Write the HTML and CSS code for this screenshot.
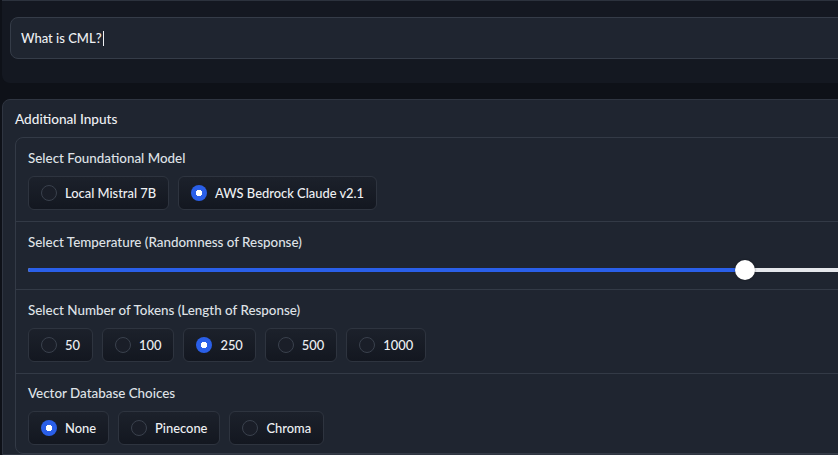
FILE: index.html
```html
<!DOCTYPE html>
<html lang="en">
<head>
<meta charset="utf-8">
<title>Additional Inputs</title>
<link rel="stylesheet" href="styles.css">
</head>
<body>
<div class="page">
  <div class="top-panel">
    <div class="textbox"><span class="value">What is CML?</span><span class="caret"></span></div>
  </div>

  <div class="accordion">
    <div class="acc-title">Additional Inputs</div>
    <div class="form">
      <div class="row">
        <div class="label">Select Foundational Model</div>
        <div class="options">
          <label class="opt"><span class="dot"></span><span>Local Mistral 7B</span></label>
          <label class="opt"><span class="dot checked"></span><span>AWS Bedrock Claude v2.1</span></label>
        </div>
      </div>
      <div class="row slider-row">
        <div class="label">Select Temperature (Randomness of Response)</div>
        <div class="slider">
          <div class="track">
            <div class="fill" style="width: 717px"></div>
            <div class="thumb"></div>
          </div>
        </div>
      </div>
      <div class="row">
        <div class="label">Select Number of Tokens (Length of Response)</div>
        <div class="options">
          <label class="opt"><span class="dot"></span><span>50</span></label>
          <label class="opt"><span class="dot"></span><span>100</span></label>
          <label class="opt"><span class="dot checked"></span><span>250</span></label>
          <label class="opt"><span class="dot"></span><span>500</span></label>
          <label class="opt"><span class="dot"></span><span>1000</span></label>
        </div>
      </div>
      <div class="row last">
        <div class="label">Vector Database Choices</div>
        <div class="options">
          <label class="opt"><span class="dot checked"></span><span>None</span></label>
          <label class="opt"><span class="dot"></span><span>Pinecone</span></label>
          <label class="opt"><span class="dot"></span><span>Chroma</span></label>
        </div>
      </div>
    </div>
  </div>
</div>
</body>
</html>
```

FILE: styles.css
```css
html, body {
  margin: 0;
  padding: 0;
  overflow: hidden;
  background: #0e1118;
}

body {
  font-family: Lato, "Noto Sans", sans-serif;
  font-size: 13.4px;
  font-weight: 500;
  color: #e4e6ea;
}

.page {
  width: 920px;
  padding-left: 2px;
}

.top-panel {
  background: #141821;
  border-top: 1px solid #2c323d;
  border-bottom-left-radius: 8px;
  padding: 16px 0 24px 8px;
  margin-bottom: 16px;
}

.textbox {
  display: flex;
  align-items: center;
  height: 40px;
  padding: 0 10px;
  background: #1f2530;
  border: 1px solid #353c48;
  border-radius: 8px;
  font-size: 13px;
  color: #eef0f3;
}

.caret {
  display: inline-block;
  width: 1px;
  height: 15px;
  margin-left: 1px;
  background: #eef0f3;
}

.accordion {
  background: #1f2530;
  border: 1px solid #2f3541;
  border-top-left-radius: 8px;
  padding: 9px 0 0 12px;
}

.acc-title {
  line-height: 20px;
  font-size: 13.6px;
  color: #eef0f3;
  margin-bottom: 8px;
}

.form {
  border: 1px solid #333a46;
  border-radius: 8px 0 0 8px;
  background: #1f2530;
}

.row {
  padding: 10px 12px 11px 12px;
  border-top: 1px solid #333a46;
}

.row:first-child {
  border-top: none;
}

.row.last {
  padding-top: 9px;
  padding-bottom: 8px;
}

.label {
  line-height: 20px;
  color: #dfe2e7;
  margin-bottom: 8px;
}

.options {
  display: flex;
  gap: 9px;
}

.opt {
  display: flex;
  align-items: center;
  gap: 8px;
  height: 32px;
  padding: 0 12px 0 12px;
  border: 1px solid #2e343f;
  border-radius: 6px;
  background: linear-gradient(to bottom, #1c212b, #131720);
  color: #eef0f3;
  font-size: 12.9px;
}

.dot {
  box-sizing: border-box;
  width: 16px;
  height: 16px;
  border-radius: 50%;
  border: 1px solid #3a414d;
  background: #1a1e28;
}

.dot.checked {
  border: none;
  background: #2a5fe8 radial-gradient(circle, #ffffff 0 3px, transparent 3.5px);
}

.slider-row {
  padding-bottom: 9px;
}

.slider {
  height: 20px;
  display: flex;
  align-items: center;
  margin-top: 7px;
}

.track {
  position: relative;
  flex: 1;
  height: 4px;
  border-radius: 2px;
  background: #e5e7eb;
}

.fill {
  height: 4px;
  border-radius: 2px 0 0 2px;
  background: #2a5fe8;
}

.thumb {
  position: absolute;
  left: 707px;
  top: -8px;
  width: 20px;
  height: 20px;
  border-radius: 50%;
  background: #ffffff;
  box-shadow: 0 0 2px rgba(0, 0, 0, 0.5);
}
```
